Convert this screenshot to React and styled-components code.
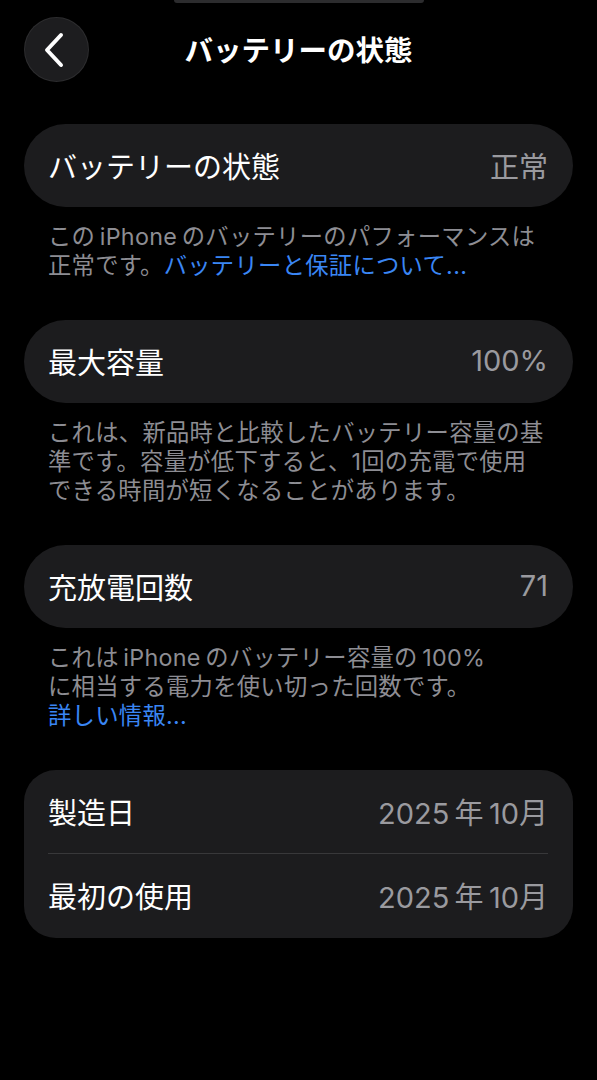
import React from 'react';
import styled, { createGlobalStyle } from 'styled-components';

const GlobalStyle = createGlobalStyle`
  html, body {
    margin: 0;
    padding: 0;
    background: #000000;
  }
  body {
    font-family: Inter, "Noto Sans CJK JP", "Noto Sans", sans-serif;
    -webkit-font-smoothing: antialiased;
  }
`;

const Page = styled.div`
  width: 597px;
  min-height: 1080px;
  background: #000000;
  color: #ffffff;
`;

const SheetEdge = styled.div`
  width: 250px;
  height: 3px;
  margin: 0 auto;
  background: #2c2c2e;
  border-radius: 0 0 6px 6px;
`;

const NavBar = styled.div`
  display: grid;
  grid-template-columns: 65px 1fr 65px;
  align-items: center;
  padding: 14px 24px 0;
`;

const BackButton = styled.button`
  width: 65px;
  height: 65px;
  border-radius: 50%;
  border: 1px solid rgba(255, 255, 255, 0.07);
  background: #1d1d1f;
  display: flex;
  align-items: center;
  justify-content: center;
  padding: 0 6px 0 0;
  cursor: pointer;
`;

const Title = styled.h1`
  margin: 0 0 3px;
  text-align: center;
  font-size: 28.5px;
  font-weight: 700;
  color: #ffffff;
`;

const Content = styled.div`
  padding: 42px 24px 0;
`;

const Card = styled.div`
  background: #1c1c1e;
  border-radius: ${(p) => (p.$pill ? '42px' : '32px')};
  padding: 0 25px 0 24px;
`;

const Row = styled.div`
  display: flex;
  align-items: center;
  justify-content: space-between;
  height: ${(p) => p.$height || 83}px;
  font-size: 29px;
  padding-bottom: 2px;
  box-sizing: border-box;
`;

const Label = styled.span`
  color: #ffffff;
  font-weight: 400;
`;

const Value = styled.span`
  color: #9a9a9f;
  font-weight: 400;
`;

const Divider = styled.div`
  height: 1px;
  background: #38383a;
`;

const Footnote = styled.p`
  margin: 0;
  padding: 15px 24px 40px;
  font-size: 23.3px;
  line-height: 29px;
  color: #8d8d93;
  letter-spacing: 0.3px;
`;

const Link = styled.a`
  color: #3a86f4;
  text-decoration: none;
`;

const ChevronLeft = () => (
  <svg width="22" height="36" viewBox="0 0 22 36" fill="none">
    <polyline
      points="18,3 4,18 18,33"
      stroke="#ffffff"
      strokeWidth="4"
      strokeLinecap="round"
      strokeLinejoin="round"
    />
  </svg>
);

const App = () => {
  return (
    <Page>
      <GlobalStyle />
      <SheetEdge />
      <NavBar>
        <BackButton aria-label="戻る">
          <ChevronLeft />
        </BackButton>
        <Title>バッテリーの状態</Title>
        <span />
      </NavBar>

      <Content>
        <Card $pill>
          <Row>
            <Label>バッテリーの状態</Label>
            <Value>正常</Value>
          </Row>
        </Card>
        <Footnote>
          この{'\u2009'}iPhone{'\u2009'}のバッテリーのパフォーマンスは
          <br />
          正常です。<Link href="#">バッテリーと保証について...</Link>
        </Footnote>

        <Card $pill>
          <Row>
            <Label>最大容量</Label>
            <Value>100%</Value>
          </Row>
        </Card>
        <Footnote>
          これは、新品時と比較したバッテリー容量の基
          <br />
          準です。容量が低下すると、1回の充電で使用
          <br />
          できる時間が短くなることがあります。
        </Footnote>

        <Card $pill>
          <Row>
            <Label>充放電回数</Label>
            <Value>71</Value>
          </Row>
        </Card>
        <Footnote>
          これは{'\u2009'}iPhone{'\u2009'}のバッテリー容量の{'\u2009'}100%
          <br />
          に相当する電力を使い切った回数です。
          <br />
          <Link href="#">詳しい情報...</Link>
        </Footnote>

        <Card>
          <Row>
            <Label>製造日</Label>
            <Value>2025{'\u2009'}年{'\u2009'}10月</Value>
          </Row>
          <Divider />
          <Row $height={84}>
            <Label>最初の使用</Label>
            <Value>2025{'\u2009'}年{'\u2009'}10月</Value>
          </Row>
        </Card>
      </Content>
    </Page>
  );
};

export default App;
